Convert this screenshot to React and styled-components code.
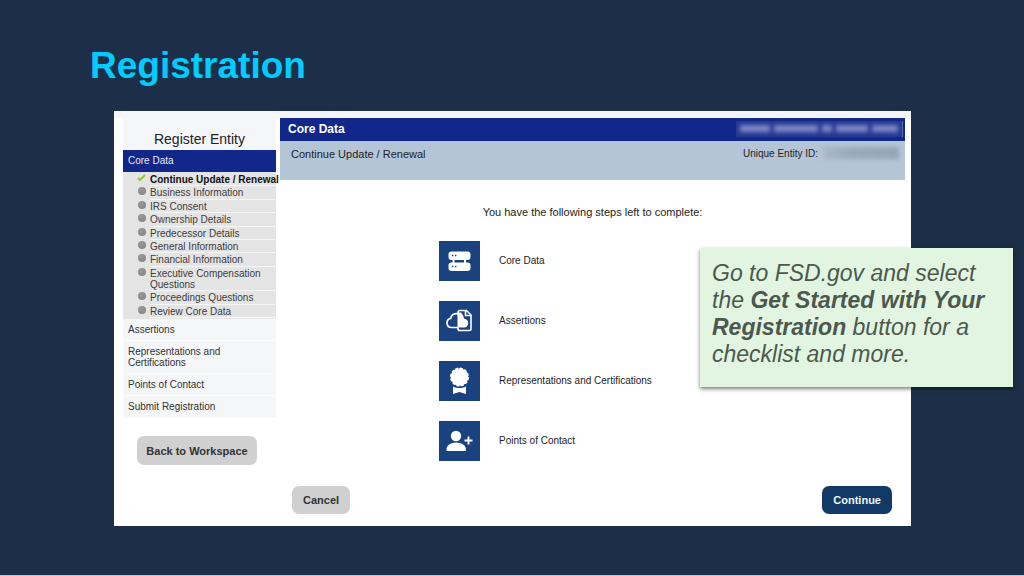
import React from "react";
import styled, { createGlobalStyle } from "styled-components";

const GlobalStyle = createGlobalStyle`
  *, *::before, *::after { box-sizing: border-box; }
  body {
    margin: 0;
    background: #1d2f48;
    font-family: "Liberation Sans", Arial, sans-serif;
    color: #222;
  }
  ul, ol, h1, h2, h3, p { margin: 0; padding: 0; list-style: none; }
`;

const Slide = styled.div`
  min-height: 100vh;
  padding: 44px 113px 48px 114px;
  border-bottom: 1px solid #c3cad3;
  background: #1d2f48;
`;

const SlideTitle = styled.h1`
  margin: 0 0 23px -24px;
  font-size: 37px;
  line-height: 44px;
  font-weight: 700;
  color: #00ccff;
`;

const Stage = styled.div`
  position: relative;
`;

const Panel = styled.div`
  display: flex;
  gap: 4px;
  min-height: 415px;
  padding: 0 6px 0 9px;
  background: linear-gradient(#f4f5fa 0 7px, #fff 7px);
`;

const Sidebar = styled.nav`
  flex: 0 0 153px;
  min-width: 0;
  display: flex;
  flex-direction: column;
  font-size: 10px;
  line-height: 11px;
`;

const SidebarTitle = styled.h2`
  padding: 19px 0 2px;
  background: #f5f6f8;
  font-size: 14px;
  line-height: 18px;
  font-weight: 400;
  text-align: center;
`;

const SidebarLink = styled.a`
  display: block;
  padding: 5px 40px 5px 5px;
  border-bottom: 1px solid ${(p) => (p.$active ? "#12278a" : "#fbfcfd")};
  background: ${(p) => (p.$active ? "#12278a" : "#f4f6f8")};
  color: ${(p) => (p.$active ? "#e8ebf8" : "#333")};
  text-decoration: none;
`;

const SubList = styled.ul`
  display: flex;
  flex-direction: column;
  min-height: 147px;
  padding: 1px 0;
  background: #e4e4e4;
`;

const SubItem = styled.li`
  flex: 1 0 auto;
  display: flex;
`;

const Marker = styled.span`
  flex: 0 0 27px;
  display: flex;
  justify-content: flex-end;
  padding: 1px 4px 0 0;
`;

const Dot = styled.span`
  width: 8px;
  height: 8px;
  border-radius: 50%;
  background: radial-gradient(circle at 40% 35%, #9a9a9a, #7f7f7f);
`;

const SubLink = styled.a`
  flex: 1;
  min-width: 0;
  padding-top: 1px;
  border-bottom: 1px solid #f6f6f6;
  color: ${(p) => (p.$current ? "#111" : "#3c3c3c")};
  font-weight: ${(p) => (p.$current ? 700 : 400)};
  white-space: ${(p) => (p.$current ? "nowrap" : "normal")};
  text-decoration: none;
`;

const Button = styled.button`
  height: 28px;
  padding: 0 11px;
  border: 0;
  border-radius: 7px;
  background: ${(p) => (p.$primary ? "#133a66" : "#d0d0d0")};
  color: ${(p) => (p.$primary ? "#f2f6fb" : "#333")};
  font: 700 11px/14px "Liberation Sans", Arial, sans-serif;
  white-space: nowrap;
`;

const SidebarFooter = styled.div`
  display: flex;
  justify-content: center;
  padding: 18px 19px 0 14px;

  ${Button} {
    flex: 1;
    height: 29px;
    padding: 0;
  }
`;

const Main = styled.main`
  flex: 1;
  min-width: 0;
  display: flex;
  flex-direction: column;
  padding-top: 7px;
`;

const TitleBar = styled.header`
  display: flex;
  align-items: center;
  justify-content: space-between;
  height: 23px;
  padding: 0 2px 2px 8px;
  background: #12278a;
  color: #fff;
`;

const TitleText = styled.h2`
  font-size: 12px;
  line-height: 14px;
`;

const HiddenName = styled.span`
  display: flex;
  align-items: center;
  gap: 4px;
  height: 16px;
  padding: 0 4px;
  background: #253893;
  border-right: 1px solid #5d6cb4;
`;

const Smudge = styled.span`
  width: ${(p) => p.$w}px;
  height: 7px;
  background: #8088c4;
  filter: blur(2px);
`;

const SubBar = styled.div`
  display: flex;
  justify-content: space-between;
  height: 39px;
  padding: 6px 6px 0 11px;
  background: #b4c5d8;
`;

const SubTitle = styled.h3`
  font-size: 11px;
  line-height: 14px;
  font-weight: 400;
`;

const EntityId = styled.p`
  display: flex;
  gap: 5px;
  font-size: 10px;
  line-height: 14px;
`;

const HiddenId = styled.span`
  width: 76px;
  height: 12px;
  background: linear-gradient(90deg, #a9b8ca, #9aa8bb 40%, #97a5b8);
  filter: blur(2px);
`;

const Intro = styled.p`
  margin: 25px 0 22px;
  font-size: 11px;
  line-height: 14px;
  text-align: center;
`;

const Steps = styled.ol`
  align-self: center;
  width: 307px;
  display: grid;
  gap: 20px;
`;

const Step = styled.li`
  display: flex;
  align-items: center;
  gap: 19px;
  font-size: 10px;
  line-height: 14px;
`;

const Tile = styled.span`
  width: 41px;
  height: 40px;
  background: #1a427f;

  svg { display: block; width: 41px; height: 40px; }
`;

const Actions = styled.div`
  display: flex;
  justify-content: space-between;
  margin-top: auto;
  padding: 24px 13px 12px 12px;
`;

const Callout = styled.aside`
  position: absolute;
  top: 137px;
  right: -102px;
  width: 313px;
  padding: 12px 12px 19px;
  background: #e1f5e1;
  box-shadow: 0 2px 4px rgba(0, 0, 0, 0.5);
  color: #4d584d;
  font-size: 23px;
  line-height: 27px;
  font-style: italic;
`;

const Check = () => (
  <svg width="9" height="9" viewBox="0 0 9 9" aria-hidden="true">
    <path d="M1 4 3 6 8 1" fill="none" stroke="#8fc93a" strokeWidth="2" />
  </svg>
);

const ServerIcon = () => (
  <svg viewBox="0 0 41 40" aria-hidden="true">
    <rect x="9.500" y="10.500" width="22" height="8.500" rx="3" fill="#fff" />
    <rect x="9.500" y="21.500" width="22" height="8.500" rx="3" fill="#fff" />
    <path d="M14.500 18v4M26 18v4" stroke="#fff" strokeWidth="2" />
    <path d="M13 14.500h1.400M16 14.500h1.400M13 25.500h1.400M16 25.500h1.400" stroke="#1a427f" strokeWidth="1.400" />
  </svg>
);

const CloudFileIcon = () => (
  <svg viewBox="0 0 41 40" aria-hidden="true">
    <path d="M19 26.500h-6.500a4.600 4.600 0 0 1-.8-9.100c.3-3.600 3.500-5.400 7.300-4.600" fill="none" stroke="#fff" strokeWidth="1.700" />
    <path d="M18.500 11.500h3.500c1.500 1.500 2.500 3.500 3 6 3 .5 4.500 2.500 4.200 5-.3 2.500-2 4-4.200 4h-6.500z" fill="#fff" />
    <path d="M19 12v-.5c0-1.500.8-2 2-2h6.500l4.500 4.500v14c0 1-.6 1.500-1.500 1.500H21c-1.200 0-2-.6-2-1.500v-1.500M26.500 9.500V14.500H32" fill="none" stroke="#fff" strokeWidth="1.600" />
  </svg>
);

const AwardIcon = () => (
  <svg viewBox="0 0 41 40" aria-hidden="true">
    <circle cx="20.500" cy="16" r="8.800" fill="#fff" />
    <circle cx="20.500" cy="16" r="8.600" fill="none" stroke="#fff" strokeWidth="1.800" strokeDasharray="3 1.500" />
    <path d="M14 25.500c4 2 9 2 13 0v7.500l-6.500-2-6.500 2z" fill="#fff" />
  </svg>
);

const PersonAddIcon = () => (
  <svg viewBox="0 0 41 40" aria-hidden="true">
    <circle cx="17" cy="15" r="5.200" fill="#fff" />
    <path d="M7.500 30v-1.500c0-4 4-7 9.700-7s9.700 3 9.700 7V30z" fill="#fff" />
    <path d="M29.500 15.500v8M25.500 19.500h8" stroke="#fff" strokeWidth="1.900" />
  </svg>
);

const coreSections = [
  "Continue Update / Renewal",
  "Business Information",
  "IRS Consent",
  "Ownership Details",
  "Predecessor Details",
  "General Information",
  "Financial Information",
  "Executive Compensation Questions",
  "Proceedings Questions",
  "Review Core Data",
];

const otherSections = [
  "Assertions",
  "Representations and Certifications",
  "Points of Contact",
  "Submit Registration",
];

const steps = [
  ["Core Data", ServerIcon],
  ["Assertions", CloudFileIcon],
  ["Representations and Certifications", AwardIcon],
  ["Points of Contact", PersonAddIcon],
];

export default function App() {
  return (
    <>
      <GlobalStyle />
      <Slide>
        <SlideTitle>Registration</SlideTitle>
        <Stage>
          <Panel>
            <Sidebar aria-label="Register Entity">
              <SidebarTitle>Register Entity</SidebarTitle>
              <SidebarLink href="#core-data" $active>Core Data</SidebarLink>
              <SubList>
                {coreSections.map((name, i) => (
                  <SubItem key={name}>
                    <Marker>{i === 0 ? <Check /> : <Dot />}</Marker>
                    <SubLink href="#section" $current={i === 0}>{name}</SubLink>
                  </SubItem>
                ))}
              </SubList>
              {otherSections.map((name) => (
                <SidebarLink key={name} href="#section">{name}</SidebarLink>
              ))}
              <SidebarFooter>
                <Button type="button">Back to Workspace</Button>
              </SidebarFooter>
            </Sidebar>
            <Main>
              <TitleBar>
                <TitleText>Core Data</TitleText>
                <HiddenName aria-hidden="true">
                  {[30, 44, 10, 32, 26].map((w) => <Smudge key={w} $w={w} />)}
                </HiddenName>
              </TitleBar>
              <SubBar>
                <SubTitle>Continue Update / Renewal</SubTitle>
                <EntityId>Unique Entity ID: <HiddenId aria-hidden="true" /></EntityId>
              </SubBar>
              <Intro>You have the following steps left to complete:</Intro>
              <Steps>
                {steps.map(([name, Icon]) => (
                  <Step key={name}>
                    <Tile><Icon /></Tile>
                    {name}
                  </Step>
                ))}
              </Steps>
              <Actions>
                <Button type="button">Cancel</Button>
                <Button type="button" $primary>Continue</Button>
              </Actions>
            </Main>
          </Panel>
          <Callout>
            Go to FSD.gov and select
            <br />
            the <b>Get Started with Your</b>
            <br />
            <b>Registration</b> button for a
            <br />
            checklist and more.
          </Callout>
        </Stage>
      </Slide>
    </>
  );
}
